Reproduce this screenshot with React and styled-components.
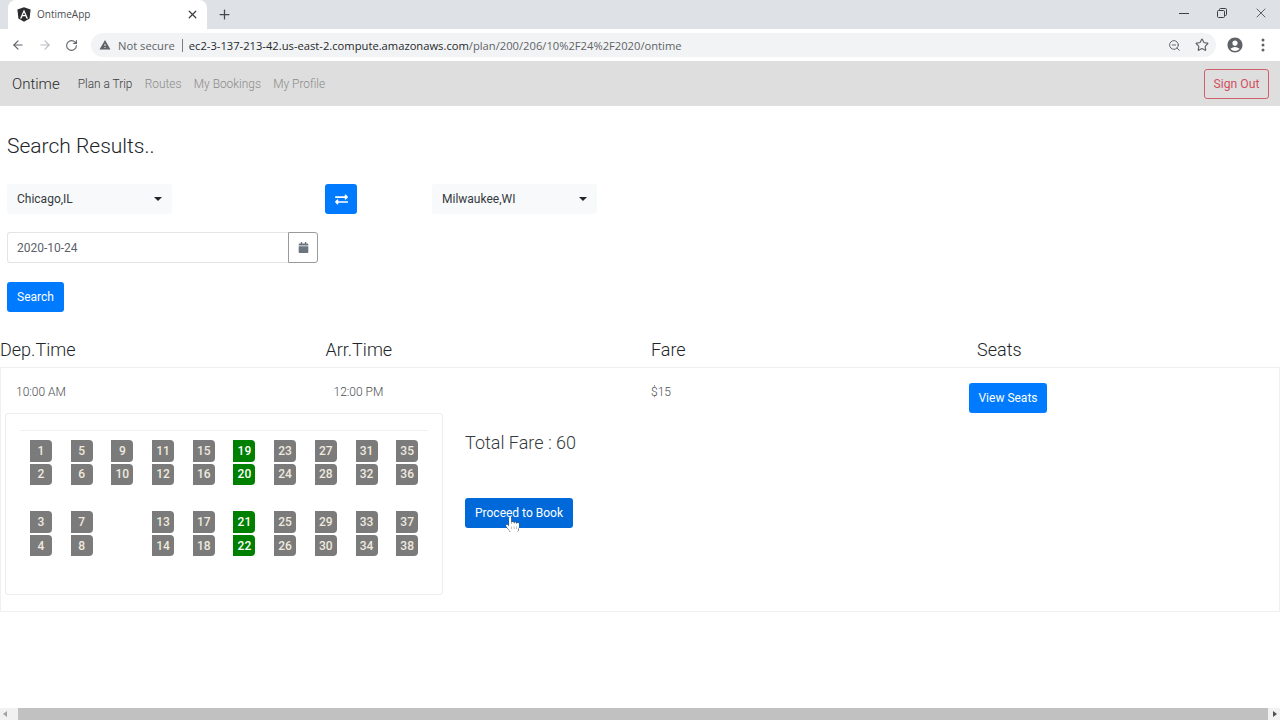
import styled, { createGlobalStyle } from "styled-components";
import { ArrowLeft, ArrowRight, RotateCw, Plus, X, ZoomOut, Star } from "lucide-react";
import { FaExchangeAlt, FaCalendar, FaHandPointer } from "react-icons/fa";
import { MdAccountCircle, MdWarning } from "react-icons/md";

const GlobalStyle = createGlobalStyle`
  html, body {
    margin: 0;
    padding: 0;
    height: 100%;
    overflow: hidden;
    background: #fff;
    font-family: Roboto, "Liberation Sans", sans-serif;
    color: #212529;
  }
  * {
    box-sizing: border-box;
  }
`;

const Screen = styled.div`
  width: 1280px;
  height: 720px;
  display: flex;
  flex-direction: column;
`;

const TabStrip = styled.div`
  height: 29px;
  background: #dee1e6;
  display: flex;
  align-items: flex-end;
  padding-left: 8px;
`;

const Tab = styled.div`
  width: 199px;
  height: 29px;
  background: #fff;
  border-radius: 8px 8px 0 0;
  display: flex;
  align-items: center;
  padding: 0 8px 1px 9px;
  gap: 6px;
  font-family: "Open Sans", "Liberation Sans", sans-serif;
  font-size: 10px;
  color: #4a4d51;
`;

const TabTitle = styled.span`
  flex: 1;
`;

const NewTab = styled.div`
  width: 18px;
  height: 29px;
  margin-left: 10px;
  display: flex;
  align-items: center;
  color: #44474b;
`;

const WindowControls = styled.div`
  margin-left: auto;
  height: 29px;
  display: flex;
  align-items: center;
  color: #3c4043;
`;

const WindowButton = styled.div`
  width: 38.5px;
  height: 29px;
  display: flex;
  align-items: center;
  justify-content: center;
  padding-bottom: 3px;
`;

const Toolbar = styled.div`
  height: 32px;
  background: #fff;
  display: flex;
  align-items: center;
  padding: 0 0 0 11px;
  color: #5f6368;
`;

const ToolButton = styled.div`
  width: ${(p) => p.$w || 27}px;
  padding-left: ${(p) => p.$pad || 0}px;
  flex-shrink: 0;
  display: flex;
  align-items: center;
  color: ${(p) => p.$color || "#5f6368"};
`;

const AddressBar = styled.div`
  width: 1125px;
  height: 24px;
  margin-left: -1px;
  flex-shrink: 0;
  border-radius: 12px;
  background: #f1f3f4;
  display: flex;
  align-items: center;
  padding: 0 7px 0 8px;
  font-family: "Open Sans", "Liberation Sans", sans-serif;
  font-size: 11.2px;
  color: #5f6368;
`;

const NotSecure = styled.span`
  margin-left: 7px;
  padding-right: 7px;
  line-height: 13px;
  border-right: 1px solid #7a7d81;
`;

const Host = styled.span`
  margin-left: 6px;
  color: #27292c;
`;

const AddressIcons = styled.div`
  margin-left: auto;
  display: flex;
  align-items: center;
  gap: 14px;
`;

const Navbar = styled.nav`
  height: 45px;
  background: #dedede;
  display: flex;
  align-items: center;
  padding: 0 11px 0 12px;
`;

const Brand = styled.span`
  font-size: 15px;
  font-weight: 300;
  color: #2b2b2b;
  margin-right: 18px;
`;

const NavLink = styled.span`
  font-size: 11.9px;
  font-weight: 300;
  margin-right: 12.3px;
  color: ${(p) => (p.$active ? "#3c3c3c" : "#8a8a8a")};
`;

const SignOut = styled.button`
  margin-left: auto;
  width: 65px;
  height: 30px;
  padding: 0;
  background: transparent;
  border: 1px solid #d0606d;
  border-radius: 3px;
  color: #d2505f;
  font-family: inherit;
  font-size: 12.2px;
`;

const Main = styled.main`
  position: relative;
  flex: 1;
  min-height: 0;
`;

const SearchForm = styled.section`
  padding: 25px 7px 0;
`;

const Title = styled.h4`
  margin: 0 0 23px;
  height: 30px;
  font-size: 21px;
  line-height: 30px;
  font-weight: 300;
  color: #212529;
`;

const PlaceRow = styled.div`
  display: flex;
  align-items: center;
`;

const Dropdown = styled.div`
  width: 165px;
  height: 30px;
  background: #f8f9fa;
  border-radius: 3px;
  display: flex;
  align-items: center;
  justify-content: space-between;
  padding: 0 10px;
  font-size: 12px;
  color: #343a40;
`;

const Caret = styled.i`
  border-top: 4px solid #212529;
  border-left: 4px solid transparent;
  border-right: 4px solid transparent;
`;

const PrimaryButton = styled.button`
  height: 30px;
  padding: 0 10px;
  border: 0;
  border-radius: 3px;
  background: ${(p) => (p.$pressed ? "#0069d9" : "#007bff")};
  color: #fff;
  font-family: inherit;
  font-size: 12px;
  white-space: nowrap;
  display: inline-flex;
  align-items: center;
  justify-content: center;
`;

const SwapButton = styled(PrimaryButton)`
  width: 32px;
  padding: 0;
  margin: 0 75px 0 153px;
`;

const DateGroup = styled.div`
  display: flex;
  width: 311px;
  height: 31px;
  margin-top: 18px;
`;

const DateInput = styled.div`
  flex: 1;
  border: 1px solid #e2e4e7;
  border-right: 0;
  border-radius: 3px 0 0 3px;
  display: flex;
  align-items: center;
  padding-left: 9px;
  font-size: 12px;
  color: #5b6168;
`;

const CalendarAddon = styled.div`
  width: 30px;
  border: 1px solid #9a9a9a;
  border-radius: 0 3px 3px 0;
  display: flex;
  align-items: center;
  justify-content: center;
  color: #6c757d;
`;

const SearchButton = styled(PrimaryButton)`
  display: flex;
  width: 57px;
  margin-top: 19px;
  padding: 0;
`;

const Columns = styled.div`
  display: grid;
  grid-template-columns: 325.5px 325.5px 326px 1fr;
`;

const HeadRow = styled(Columns)`
  margin-top: 21px;
  margin-bottom: 2px;
  height: 32px;
  align-items: center;
  font-size: 18px;
  font-weight: 300;
  color: #212529;
`;

const ResultCard = styled.section`
  height: 245px;
  border: 1px solid #f0f0f0;
  padding-left: 4px;
`;

const ResultRow = styled(Columns)`
  height: 45px;
  margin-left: -5px;
  align-items: center;
  font-size: 12px;
  font-weight: 300;
  color: #4a4e53;
`;

const Cell = styled.div`
  padding-left: ${(p) => p.$indent || 0}px;
  padding-top: 3px;
`;

const ViewSeats = styled(PrimaryButton)`
  width: 78px;
  margin-left: -8px;
  margin-top: 11px;
`;

const BookingArea = styled.div`
  display: flex;
  align-items: flex-start;
`;

const SeatPanel = styled.div`
  width: 438px;
  height: 182px;
  border: 1px solid #ececec;
  border-radius: 3px;
  padding: 16px 14px 0;
`;

const SeatRule = styled.hr`
  margin: 0 0 9px;
  border: 0;
  border-top: 1px solid #f0f0f0;
`;

const Deck = styled.div`
  display: grid;
  grid-template-columns: repeat(10, 22px);
  grid-auto-rows: 21.5px;
  column-gap: 18.7px;
  row-gap: 2.2px;
  padding-left: 10px;
  margin-bottom: 26px;
`;

const Seat = styled.div`
  border-radius: 0 4px 4px 0;
  background: ${(p) => (p.$booked ? "#008000" : "#7b7b7b")};
  color: ${(p) => (p.$booked ? "#ffffff" : "#efe9df")};
  font-size: 12px;
  font-weight: 500;
  display: flex;
  align-items: center;
  justify-content: center;
  visibility: ${(p) => (p.$empty ? "hidden" : "visible")};
`;

const Summary = styled.div`
  margin-left: 22px;
  padding-top: 18px;
`;

const TotalFare = styled.div`
  font-size: 18px;
  line-height: 24px;
  font-weight: 300;
  color: #343a40;
`;

const BookButton = styled(PrimaryButton)`
  width: 108px;
  margin-top: 43px;
`;

const Pointer = styled.div`
  position: absolute;
  left: 505px;
  top: 411px;
  color: #fff;
  line-height: 0;
  filter: drop-shadow(0 0 0.6px #000) drop-shadow(0 0 0.4px #000);
`;

const Scrollbar = styled.div`
  height: 12px;
  background: #f1f1f1;
  display: flex;
  align-items: center;
  justify-content: space-between;
`;

const ScrollThumb = styled.div`
  width: 1250px;
  height: 12px;
  background: #c1c1c1;
  margin-left: 6px;
`;

const ScrollArrow = styled.i`
  width: 0;
  height: 0;
  margin: 0 3px;
  border-top: 3.5px solid transparent;
  border-bottom: 3.5px solid transparent;
  ${(p) => (p.$right ? "border-left: 4px solid #505050;" : "border-right: 4px solid #a3a3a3;")}
`;

const upperDeck = [
  [1, 5, 9, 11, 15, 19, 23, 27, 31, 35],
  [2, 6, 10, 12, 16, 20, 24, 28, 32, 36],
];

const lowerDeck = [
  [3, 7, null, 13, 17, 21, 25, 29, 33, 37],
  [4, 8, null, 14, 18, 22, 26, 30, 34, 38],
];

const booked = [19, 20, 21, 22];

function AngularLogo() {
  return (
    <svg width="14" height="15" viewBox="0 0 14 15">
      <path d="M7 0.3 13.6 2.6 12.6 11.4 7 14.7 1.4 11.4 0.4 2.6Z" fill="#2b2b2d" />
      <path d="M7 2.4 3 11.4H4.6L5.4 9.3H8.6L9.4 11.4H11L7 2.4ZM7 5.5 8.1 8H5.9L7 5.5Z" fill="#fff" />
    </svg>
  );
}

function RestoreIcon() {
  return (
    <svg width="10" height="10" viewBox="0 0 10 10" fill="none" stroke="currentColor" strokeWidth="1">
      <rect x="0.5" y="2.5" width="7" height="7" rx="1" />
      <path d="M2.5 2.5V1.5a1 1 0 0 1 1-1h5a1 1 0 0 1 1 1v5a1 1 0 0 1-1 1H7.5" />
    </svg>
  );
}

function MenuDots() {
  return (
    <svg width="4" height="14" viewBox="0 0 4 14" fill="currentColor">
      <circle cx="2" cy="2" r="1.5" />
      <circle cx="2" cy="7" r="1.5" />
      <circle cx="2" cy="12" r="1.5" />
    </svg>
  );
}

function SeatDeck({ rows }) {
  return (
    <Deck>
      {rows.flat().map((n, i) => (
        <Seat key={i} $empty={n === null} $booked={booked.includes(n)}>
          {n}
        </Seat>
      ))}
    </Deck>
  );
}

export default function App() {
  return (
    <Screen>
      <GlobalStyle />
      <TabStrip>
        <Tab>
          <AngularLogo />
          <TabTitle>OntimeApp</TabTitle>
          <X size={13} strokeWidth={2.4} color="#3c4043" />
        </Tab>
        <NewTab>
          <Plus size={15} strokeWidth={2} />
        </NewTab>
        <WindowControls>
          <WindowButton>
            <svg width="10" height="10" viewBox="0 0 10 10">
              <path d="M0 5.5H10" stroke="currentColor" strokeWidth="1" />
            </svg>
          </WindowButton>
          <WindowButton>
            <RestoreIcon />
          </WindowButton>
          <WindowButton>
            <X size={16} strokeWidth={1.2} />
          </WindowButton>
        </WindowControls>
      </TabStrip>

      <Toolbar>
        <ToolButton>
          <ArrowLeft size={14} strokeWidth={2} />
        </ToolButton>
        <ToolButton $color="#b9bcc0">
          <ArrowRight size={14} strokeWidth={2} />
        </ToolButton>
        <ToolButton>
          <RotateCw size={13} strokeWidth={2} />
        </ToolButton>
        <AddressBar>
          <MdWarning size={12} color="#5f6368" />
          <NotSecure>Not secure</NotSecure>
          <Host>
            ec2-3-137-213-42.us-east-2.compute.amazonaws.com
          </Host>
          <span>/plan/200/206/10%2F24%2F2020/ontime</span>
          <AddressIcons>
            <ZoomOut size={13} strokeWidth={1.8} />
            <Star size={14} strokeWidth={2} />
          </AddressIcons>
        </AddressBar>
        <ToolButton $w={28} $pad={10}>
          <MdAccountCircle size={18} />
        </ToolButton>
        <ToolButton $w={37} $pad={17}>
          <MenuDots />
        </ToolButton>
      </Toolbar>

      <Navbar>
        <Brand>Ontime</Brand>
        <NavLink $active>Plan a Trip</NavLink>
        <NavLink>Routes</NavLink>
        <NavLink>My Bookings</NavLink>
        <NavLink>My Profile</NavLink>
        <SignOut>Sign Out</SignOut>
      </Navbar>

      <Main>
        <SearchForm>
          <Title>Search Results..</Title>
          <PlaceRow>
            <Dropdown>
              Chicago,IL
              <Caret />
            </Dropdown>
            <SwapButton>
              <FaExchangeAlt size={13} />
            </SwapButton>
            <Dropdown>
              Milwaukee,WI
              <Caret />
            </Dropdown>
          </PlaceRow>
          <DateGroup>
            <DateInput>2020-10-24</DateInput>
            <CalendarAddon>
              <FaCalendar size={11} />
            </CalendarAddon>
          </DateGroup>
          <SearchButton>Search</SearchButton>
        </SearchForm>

        <HeadRow>
          <div>Dep.Time</div>
          <div>Arr.Time</div>
          <div>Fare</div>
          <div>Seats</div>
        </HeadRow>

        <ResultCard>
          <ResultRow>
            <Cell $indent={16}>10:00 AM</Cell>
            <Cell $indent={8}>12:00 PM</Cell>
            <Cell>$15</Cell>
            <Cell>
              <ViewSeats>View Seats</ViewSeats>
            </Cell>
          </ResultRow>
          <BookingArea>
            <SeatPanel>
              <SeatRule />
              <SeatDeck rows={upperDeck} />
              <SeatDeck rows={lowerDeck} />
            </SeatPanel>
            <Summary>
              <TotalFare>Total Fare : 60</TotalFare>
              <BookButton $pressed>Proceed to Book</BookButton>
            </Summary>
          </BookingArea>
        </ResultCard>

        <Pointer>
          <FaHandPointer size={15} />
        </Pointer>
      </Main>

      <Scrollbar>
        <ScrollArrow />
        <ScrollThumb />
        <ScrollArrow $right />
      </Scrollbar>
    </Screen>
  );
}
